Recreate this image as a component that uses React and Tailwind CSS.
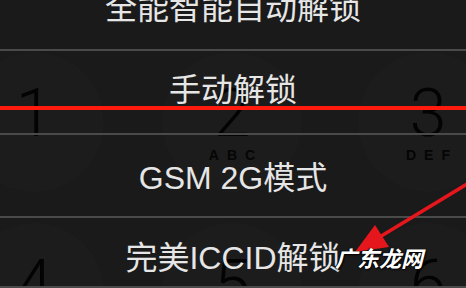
export default function App() {
  const keys = [
    { d: "1", l: "", x: 34, y: 122 },
    { d: "2", l: "ABC", x: 232, y: 122 },
    { d: "3", l: "DEF", x: 428, y: 122 },
    { d: "4", l: "", x: 34, y: 293 },
    { d: "5", l: "", x: 232, y: 293 },
    { d: "6", l: "", x: 428, y: 293 },
  ];
  const font = { fontFamily: '"Liberation Sans", "Noto Sans CJK SC", sans-serif' };
  return (
    <div className="relative w-[466px] h-[288px] overflow-hidden bg-[#1a1a1a]">
      {/* keypad underneath */}
      <div className="absolute inset-0">
        {keys.map((k) => (
          <div
            key={k.d}
            className="absolute w-[140px] h-[140px] rounded-full bg-[#1c1c1c]"
            style={{ left: k.x - 70, top: k.y - 70 }}
          >
            <div
              className="absolute left-0 right-0 top-[12px] text-center text-[66px] leading-[100px] font-light text-[#030303]"
              style={{ fontFamily: "Roboto, sans-serif" }}
            >
              {k.d}
            </div>
            {k.l && (
              <div
                className="absolute left-0 right-0 top-[95px] text-center text-[14px] leading-[16px] font-bold tracking-[8px] pl-[8px] text-[#050505]"
                style={{ fontFamily: '"Liberation Sans", sans-serif' }}
              >
                {k.l}
              </div>
            )}
          </div>
        ))}
      </div>

      {/* menu rows */}
      <div className="relative flex flex-col text-[#e6e6e6] text-[32px] leading-[32px]" style={font}>
        <div className="h-[49px] flex justify-center">
          <span className="mt-[-8px]">全能智能自动解锁</span>
        </div>
        <div className="h-[2px] bg-[#4a4a4a]" />
        <div className="h-[82px] flex justify-center pt-[23px]">
          <span>手动解锁</span>
        </div>
        <div className="h-[2px] bg-[#4a4a4a]" />
        <div className="h-[81px] flex justify-center pt-[27px]">
          <span>GSM 2G模式</span>
        </div>
        <div className="h-[2px] bg-[#4a4a4a]" />
        <div className="h-[68px] flex justify-center pt-[24px]">
          <span>完美ICCID解锁</span>
        </div>
        <div className="h-[2px] bg-[#4a4a4a]" />
      </div>

      {/* annotations */}
      <div className="absolute left-0 right-0 top-[106px] h-[4px] bg-[#ff1a0e]" />
      <svg className="absolute inset-0" width="466" height="288" viewBox="0 0 466 288">
        <line x1="472" y1="181" x2="378" y2="238" stroke="#e5161c" strokeWidth="3.5" />
        <polygon points="355,252 375,225 389,247" fill="#e5161c" />
      </svg>
      <div
        className="absolute left-[335px] top-[244px] text-[22px] leading-[26px] font-bold text-white italic"
        style={{
          fontFamily: '"Noto Sans CJK SC", sans-serif',
          textShadow: "1px 1px 2px #000, -1px 0 1px #000",
        }}
      >
        广东龙网
      </div>
    </div>
  );
}
